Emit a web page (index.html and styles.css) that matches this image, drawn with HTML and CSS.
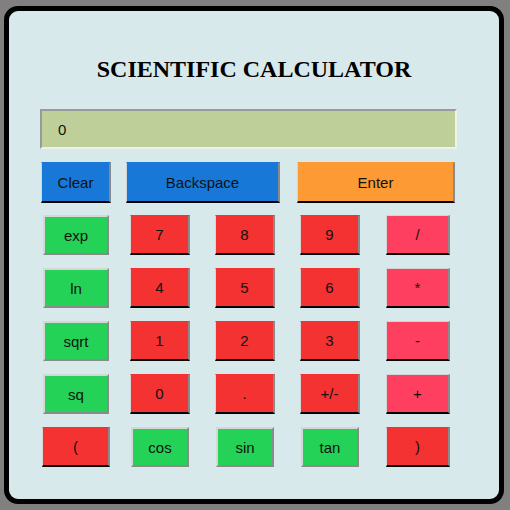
FILE: index.html
```html
<!DOCTYPE html>
<html>
<head>
<meta charset="utf-8">
<link rel="stylesheet" href="styles.css">
</head>
<body>
<div class="calc">
  <h1 class="title">SCIENTIFIC CALCULATOR</h1>
  <div class="display">0</div>
  <div class="top-row">
    <button class="btn blue w-clear">Clear</button>
    <button class="btn blue w-back">Backspace</button>
    <button class="btn orange w-enter">Enter</button>
  </div>
  <div class="keys">
    <button class="btn green c1">exp</button>
    <button class="btn red c2">7</button>
    <button class="btn red c3">8</button>
    <button class="btn red c4">9</button>
    <button class="btn pink c5">/</button>

    <button class="btn green c1">ln</button>
    <button class="btn red c2">4</button>
    <button class="btn red c3">5</button>
    <button class="btn red c4">6</button>
    <button class="btn pink c5">*</button>

    <button class="btn green c1">sqrt</button>
    <button class="btn red c2">1</button>
    <button class="btn red c3">2</button>
    <button class="btn red c4">3</button>
    <button class="btn pink c5">-</button>

    <button class="btn green c1">sq</button>
    <button class="btn red c2">0</button>
    <button class="btn red c3">.</button>
    <button class="btn red c4">+/-</button>
    <button class="btn pink c5">+</button>

    <button class="btn red c1">(</button>
    <button class="btn green c2">cos</button>
    <button class="btn green c3">sin</button>
    <button class="btn green c4">tan</button>
    <button class="btn red c5">)</button>
  </div>
</div>
</body>
</html>
```

FILE: styles.css
```css
html, body {
  margin: 0;
  padding: 0;
  background: #808080;
}

.calc {
  box-sizing: border-box;
  width: 500px;
  height: 498px;
  margin: 6px 0 0 4px;
  border: 5px solid #000;
  border-radius: 14px;
  background: #d8e9ec;
  display: flex;
  flex-direction: column;
}

.title {
  margin: 44px 0 0;
  font-family: "Liberation Serif", "Times New Roman", serif;
  font-weight: bold;
  font-size: 24px;
  line-height: 28px;
  text-align: center;
  color: #000;
}

.display {
  box-sizing: border-box;
  width: 417px;
  height: 40px;
  margin: 26px 0 0 31px;
  padding-left: 16px;
  background: #bfcf9a;
  border: 2px solid;
  border-color: #9a9a9a #eef2ee #eef2ee #9a9a9a;
  display: flex;
  align-items: center;
  font-family: "Liberation Sans", Arial, sans-serif;
  font-size: 15px;
  color: #111;
}

.btn {
  box-sizing: border-box;
  height: 40px;
  margin: 0;
  padding: 0;
  font-family: "Liberation Sans", Arial, sans-serif;
  font-size: 15px;
  color: #111;
  border-style: solid;
  border-width: 1px 2px 2px 1px;
  border-color: transparent #8a8a8a #000 #d4d4d4;
}

.top-row {
  display: flex;
  margin: 13px 0 0 32px;
}

.top-row .btn {
  height: 41px;
}

.w-clear { width: 70px; }
.w-back { width: 154px; margin-left: 15px; }
.w-enter { width: 158px; margin-left: 17px; }

.keys {
  display: grid;
  grid-template-columns: 88px 85px 85px 86px 64px;
  grid-auto-rows: 40px;
  row-gap: 13px;
  margin: 12px 0 0 33px;
}

.keys .btn {
  justify-self: start;
}

.c1 { width: 68px; }
.c2, .c3, .c4 { width: 60px; }
.c5 { width: 64px; }

.blue { background: #1778d8; }
.orange { background: #fe9a34; }
.red { background: #f43232; }
.pink { background: #fe3f60; border-top-color: #d4d4d4; }

.green {
  background: #24d257;
  border-width: 2px;
  border-color: #d6d6d6 #8a8a8a #8a8a8a #d6d6d6;
}

.keys .green {
  margin-left: 1px;
}

.keys .green.c1 { width: 66px; }
.keys .green.c2, .keys .green.c3, .keys .green.c4 { width: 58px; }
```
